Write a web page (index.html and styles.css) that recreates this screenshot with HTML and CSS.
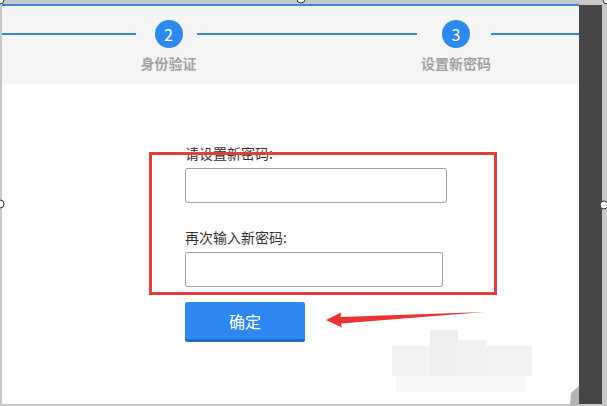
FILE: index.html
```html
<!DOCTYPE html>
<html lang="zh-CN">
<head>
    <meta charset="UTF-8">
    <meta name="viewport" content="width=device-width, initial-scale=1.0">
    <title>设置新密码</title>
    <link rel="stylesheet" href="styles.css">
</head>
<body>
    <div class="window">
        <div class="page">
            <!-- Steps header -->
            <div class="steps">
                <div class="step-line first"></div>
                <div class="step step-two">
                    <div class="step-circle">2</div>
                    <div class="step-label">身份验证</div>
                </div>
                <div class="step-line middle"></div>
                <div class="step step-three">
                    <div class="step-circle">3</div>
                    <div class="step-label">设置新密码</div>
                </div>
                <div class="step-line last"></div>
            </div>

            <!-- Password form -->
            <div class="form">
                <label class="form-label">请设置新密码:</label>
                <input class="form-input" type="password">
                <label class="form-label second">再次输入新密码:</label>
                <input class="form-input narrow" type="password">
                <button class="submit-btn">确定</button>
            </div>
        </div>
        <div class="scroll-bar"></div>
    </div>

    <!-- Annotation layer: red box, arrow, blurred watermark, editor handles -->
    <svg class="annotations" width="607" height="406" viewBox="0 0 607 406">
        <g class="watermark">
            <rect x="392" y="346" width="40" height="30" fill="#f3f3f3"/>
            <rect x="430" y="330" width="28" height="48" fill="#eeeeee"/>
            <rect x="456" y="340" width="30" height="36" fill="#f1f1f1"/>
            <rect x="484" y="346" width="48" height="30" fill="#f2f2f2"/>
            <rect x="396" y="376" width="130" height="16" fill="#f7f7f7"/>
        </g>
        <rect class="red-box" x="150.5" y="153.5" width="345" height="140" fill="none" stroke="#e53e3e" stroke-width="3"/>
        <polygon points="326,320 341,312.5 340.5,317 485,312 341,323.5 342,327.5" fill="#ea3434"/>
        <polygon points="579,386 579,405 570,405 571,393" fill="#b4b4b4"/>
        <g fill="#fff" stroke="#333" stroke-width="1">
            <circle cx="0" cy="0" r="4"/>
            <circle cx="301" cy="-1" r="4"/>
            <circle cx="607" cy="0" r="4"/>
            <circle cx="0" cy="204" r="4"/>
            <circle cx="604" cy="205" r="4"/>
        </g>
    </svg>
</body>
</html>
```

FILE: styles.css
```css
/* General */
body {
    margin: 0;
    padding: 0;
    width: 607px;
    height: 406px;
    overflow: hidden;
    background: #c8c8c8;
    font-family: "Noto Sans CJK SC", "Noto Sans", sans-serif;
    position: relative;
}

.window {
    display: flex;
    box-sizing: border-box;
    height: 406px;
    padding: 4px 5px 2px 2px;
}

.page {
    width: 577px;
    background: #fff;
    border-top: 2px solid #3a87e0;
}

.scroll-bar {
    width: 23px;
    margin-top: 1px;
    background: #464646;
}

/* Steps header */
.steps {
    display: flex;
    align-items: flex-start;
    box-sizing: border-box;
    height: 78px;
    padding-top: 14px;
    background: #f5f5f5;
}

.step-line {
    height: 2px;
    margin-top: 13px;
    background: #3a87e0;
}

.step-line.first {
    width: 134px;
}

.step-line.middle {
    width: 220px;
}

.step-line.last {
    flex: 1;
}

.step {
    display: flex;
    flex-direction: column;
    align-items: center;
    box-sizing: border-box;
}

.step-two {
    width: 61px;
    padding-left: 4px;
}

.step-three {
    width: 74px;
    padding-left: 4px;
}

.step-circle {
    width: 28px;
    height: 28px;
    border-radius: 50%;
    background: #2d89ef;
    color: #fff;
    font-size: 16px;
    line-height: 28px;
    text-align: center;
}

.step-label {
    margin-top: 5px;
    font-size: 14px;
    line-height: 20px;
    font-weight: bold;
    color: #a3a3a3;
    white-space: nowrap;
}

/* Form */
.form {
    display: flex;
    flex-direction: column;
    align-items: flex-start;
    width: 262px;
    margin-left: 183px;
    padding-top: 59px;
}

.form-label {
    font-size: 14px;
    line-height: 20px;
    color: #333;
}

.form-label.second {
    margin-top: 24px;
}

.form-input {
    box-sizing: border-box;
    width: 262px;
    height: 35px;
    margin: 5px 0 0;
    border: 1px solid #a6a6a6;
    border-radius: 2px;
    background: #fff;
}

.form-input.narrow {
    width: 258px;
}

.submit-btn {
    box-sizing: border-box;
    width: 120px;
    height: 40px;
    margin-top: 15px;
    border: none;
    border-bottom: 3px solid #1f6cc4;
    border-radius: 2px;
    background: #2d87ef;
    color: #fff;
    font-family: "Noto Sans CJK SC", sans-serif;
    font-size: 16px;
    padding: 0;
}

/* Annotation overlay */
.annotations {
    position: absolute;
    left: 0;
    top: 0;
    overflow: visible;
    pointer-events: none;
}
```
